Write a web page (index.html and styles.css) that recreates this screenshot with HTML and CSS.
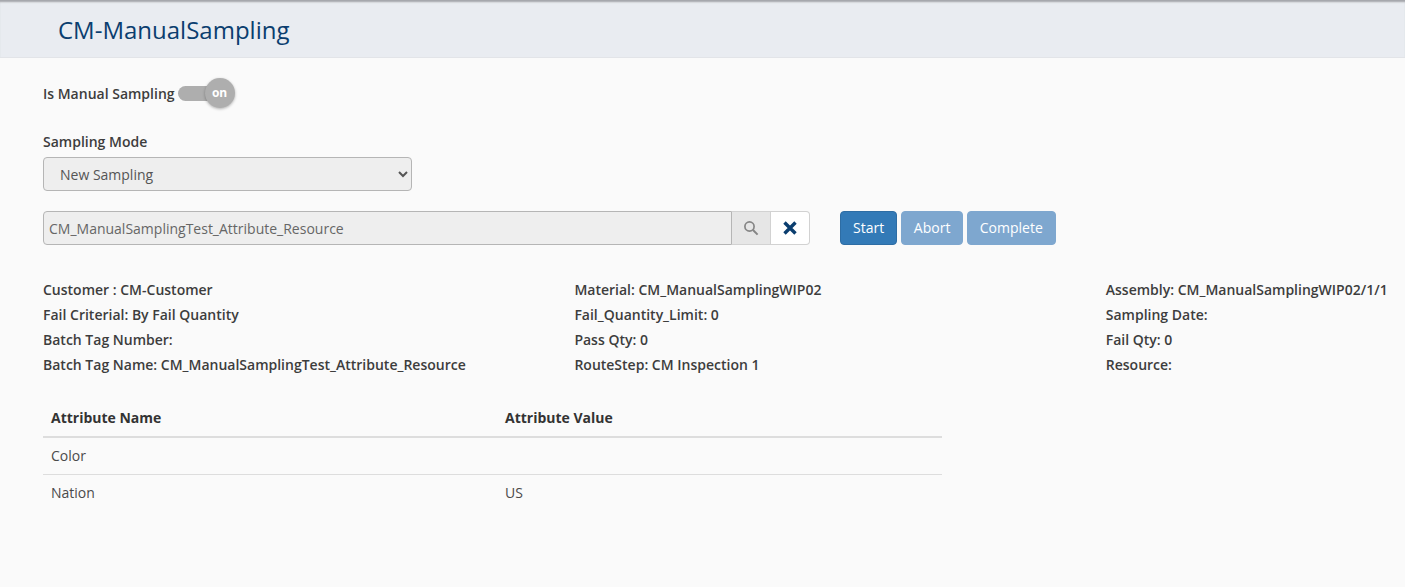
FILE: index.html
```html
<!DOCTYPE html>
<html lang="en">
<head>
  <meta charset="UTF-8">
  <meta name="viewport" content="width=device-width, initial-scale=1.0">
  <title>CM-ManualSampling</title>
  <link rel="stylesheet" href="styles.css">
</head>
<body>
  <header class="page-header">
    <h1>CM-ManualSampling</h1>
  </header>

  <main class="content">
    <div class="toggle-row">
      <span>Is Manual Sampling</span>
      <span class="toggle">
        <span class="toggle-knob">on</span>
      </span>
    </div>

    <div class="mode-field">
      <label for="samplingMode">Sampling Mode</label>
      <select id="samplingMode">
        <option>New Sampling</option>
      </select>
    </div>

    <div class="action-row">
      <div class="search-group">
        <input type="text" value="CM_ManualSamplingTest_Attribute_Resource" disabled>
        <span class="search-btn">
          <svg width="16" height="16" viewBox="0 0 16 16" fill="none" stroke="#858585" stroke-width="1.7">
            <circle cx="6.5" cy="6.5" r="4.6"/>
            <path d="M10 10l4.6 4.6" stroke-width="2"/>
          </svg>
        </span>
        <span class="clear-btn">
          <svg width="14" height="14" viewBox="0 0 14 14" fill="none" stroke="#0b3e6f" stroke-width="3.4">
            <path d="M1.5 1.5l11 11M12.5 1.5l-11 11"/>
          </svg>
        </span>
      </div>
      <div class="buttons">
        <button type="button" class="btn">Start</button>
        <button type="button" class="btn btn-off">Abort</button>
        <button type="button" class="btn btn-off">Complete</button>
      </div>
    </div>

    <div class="info-grid">
      <div>Customer : CM-Customer</div>
      <div>Material: CM_ManualSamplingWIP02</div>
      <div>Assembly: CM_ManualSamplingWIP02/1/1</div>
      <div>Fail Criterial: By Fail Quantity</div>
      <div>Fail_Quantity_Limit: 0</div>
      <div>Sampling Date:</div>
      <div>Batch Tag Number:</div>
      <div>Pass Qty: 0</div>
      <div>Fail Qty: 0</div>
      <div>Batch Tag Name: CM_ManualSamplingTest_Attribute_Resource</div>
      <div>RouteStep: CM Inspection 1</div>
      <div>Resource:</div>
    </div>

    <table class="attr-table">
      <colgroup>
        <col class="attr-name-col">
        <col>
      </colgroup>
      <thead>
        <tr>
          <th>Attribute Name</th>
          <th>Attribute Value</th>
        </tr>
      </thead>
      <tbody>
        <tr>
          <td>Color</td>
          <td></td>
        </tr>
        <tr>
          <td>Nation</td>
          <td>US</td>
        </tr>
      </tbody>
    </table>
  </main>
</body>
</html>
```

FILE: styles.css
```css
* {
  box-sizing: border-box;
}
html, body {
  height: 100%;
}
body {
  margin: 0;
  font-family: "Open Sans", Arial, sans-serif;
  font-size: 14px;
  line-height: 20px;
  color: #333;
  background-color: #fafafa;
  overflow: hidden;
}
.page-header {
  height: 58px;
  padding: 3px 0 0 58px;
  background-color: #e9ecf1;
  border-bottom: 1px solid #e2e4e8;
  box-shadow: inset 0 3px 2px -1px #a3a5a9;
}
h1 {
  margin: 0;
  font-size: 24px;
  font-weight: 400;
  line-height: 54px;
  color: #0b3e6f;
}
.content {
  padding: 20px 0 0 43px;
}
.toggle-row {
  display: flex;
  align-items: center;
  gap: 3px;
  height: 30px;
  font-weight: 600;
  color: #3d3d3d;
  padding-top: 1px;
}
.toggle {
  position: relative;
  display: block;
  width: 57px;
  height: 30px;
  margin-top: -1px;
}
.toggle::before {
  content: "";
  position: absolute;
  left: 0;
  top: 8px;
  width: 44px;
  height: 15px;
  border-radius: 8px;
  background-color: #aeaeae;
}
.toggle-knob {
  position: absolute;
  left: 27px;
  top: 0;
  width: 30px;
  height: 30px;
  border-radius: 50%;
  background-color: #aeaeae;
  box-shadow: 0 1px 3px rgba(0,0,0,0.3);
  color: #fff;
  font-size: 12px;
  font-weight: 700;
  line-height: 30px;
  text-align: center;
}
.mode-field {
  margin-top: 24px;
}
label {
  display: block;
  margin-bottom: 5px;
  line-height: 20px;
  font-weight: 600;
  color: #3d3d3d;
}
select {
  display: block;
  width: 369px;
  height: 34px;
  padding: 0 12px;
  border: 1px solid #b5b5b5;
  border-radius: 4px;
  background-color: #eee;
  color: #555;
  font-family: inherit;
  font-size: 14px;
}
.action-row {
  display: flex;
  margin-top: 20px;
}
.search-group {
  display: flex;
  width: 767px;
  height: 34px;
}
.search-group input {
  flex: 1;
  min-width: 0;
  padding: 0 5px;
  border: 1px solid #b5b5b5;
  border-radius: 4px 0 0 4px;
  background-color: #eee;
  color: #666;
  font-family: inherit;
  font-size: 14px;
}
.search-btn, .clear-btn {
  display: flex;
  align-items: center;
  justify-content: center;
  width: 39px;
  border: 1px solid #d2d2d2;
  border-left: none;
}
.search-btn {
  background-color: #e6e6e6;
}
.clear-btn {
  background-color: #fff;
  border-radius: 0 4px 4px 0;
}
.buttons {
  display: flex;
  gap: 4px;
  margin-left: 30px;
}
.btn {
  height: 34px;
  padding: 0 12px 1px;
  border: 1px solid #2e6da4;
  border-radius: 4px;
  background-color: #337ab7;
  color: #fff;
  font-family: inherit;
  font-size: 14px;
}
.btn-off {
  padding: 0 11.7px 1px;
  border-color: #7ea7cf;
  background-color: #7ea7cf;
}
.info-grid {
  display: grid;
  grid-template-columns: 531.4px 531.4px 1fr;
  grid-auto-rows: 25px;
  margin-top: 32px;
  line-height: 25px;
  font-weight: 600;
  color: #3d3d3d;
}
.attr-table {
  width: 899px;
  margin-top: 22px;
  border-collapse: collapse;
  table-layout: fixed;
}
.attr-name-col {
  width: 454px;
}
.attr-table th, .attr-table td {
  padding: 8px;
  text-align: left;
  line-height: 20px;
}
.attr-table th {
  height: 38px;
  font-weight: 700;
  border-bottom: 2px solid #ddd;
}
.attr-table td {
  height: 37px;
  color: #4a4a4a;
  border-bottom: 1px solid #ddd;
}
.attr-table tr:last-child td {
  border-bottom: none;
}
```
